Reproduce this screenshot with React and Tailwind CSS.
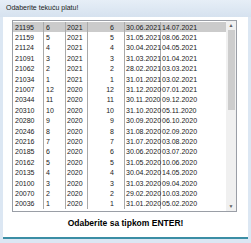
import React from "react";

const rows = [
  ["21195", "6", "2021", "6", "30.06.2021", "14.07.2021"],
  ["21159", "5", "2021", "5", "31.05.2021", "08.06.2021"],
  ["21124", "4", "2021", "4", "30.04.2021", "04.05.2021"],
  ["21091", "3", "2021", "3", "31.03.2021", "01.04.2021"],
  ["21062", "2", "2021", "2", "28.02.2021", "03.03.2021"],
  ["21034", "1", "2021", "1", "31.01.2021", "03.02.2021"],
  ["21007", "12", "2020", "12", "31.12.2020", "07.01.2021"],
  ["20344", "11", "2020", "11", "30.11.2020", "09.12.2020"],
  ["20310", "10", "2020", "10", "31.10.2020", "05.11.2020"],
  ["20280", "9", "2020", "9", "30.09.2020", "06.10.2020"],
  ["20246", "8", "2020", "8", "31.08.2020", "02.09.2020"],
  ["20216", "7", "2020", "7", "31.07.2020", "03.08.2020"],
  ["20185", "6", "2020", "6", "30.06.2020", "03.07.2020"],
  ["20162", "5", "2020", "5", "31.05.2020", "10.06.2020"],
  ["20135", "4", "2020", "4", "30.04.2020", "14.05.2020"],
  ["20100", "3", "2020", "3", "31.03.2020", "09.04.2020"],
  ["20070", "2", "2020", "2", "29.02.2020", "10.03.2020"],
  ["20036", "1", "2020", "1", "31.01.2020", "05.02.2020"],
];

const sep = "border-r border-[#a9a9a9]";

export default function App() {
  return (
    <div
      className="w-[251px] h-[243px] bg-[#dce7f3] flex flex-col text-[#1a1a1a]"
      style={{ fontFamily: '"Liberation Sans", Arial, sans-serif' }}
    >
      {/* title bar */}
      <div className="h-[17px] flex items-center pl-[6px] text-[7px] bg-gradient-to-b from-[#e6eef7] to-[#d6e2ef]">
        Odaberite tekuću platu!
      </div>

      {/* client area */}
      <div className="flex-1 mx-[3px] mb-[4px] bg-white border-b-2 border-[#3b8ea5] flex flex-col">
        <div className="mt-[3px] ml-[9px] w-[225px] h-[192px] border border-[#9a9ea6] flex">
          <div className="flex-1 overflow-hidden pt-[1px]">
            {rows.map((r, i) => (
              <div
                key={i}
                className={`h-[10.4px] flex items-center text-[7px] leading-none ${
                  i === 0 ? "bg-[#cbcbcb]" : ""
                }`}
              >
                <div className={`w-[31px] h-full flex items-center pl-[2px] ${sep}`}>{r[0]}</div>
                <div className={`w-[22px] h-full flex items-center pl-[2px] ${sep}`}>{r[1]}</div>
                <div className={`w-[22px] h-full flex items-center pl-[1px] ${sep}`}>{r[2]}</div>
                <div className={`w-[37px] h-full flex items-center justify-end pr-[10px] ${sep}`}>{r[3]}</div>
                <div className={`w-[36px] h-full flex items-center pl-[1px] ${sep}`}>{r[4]}</div>
                <div className="flex-1 h-full flex items-center pl-[1px]">{r[5]}</div>
              </div>
            ))}
          </div>
          {/* scrollbar */}
          <div className="w-[10px] bg-[#f0f0f0] flex flex-col items-center">
            <div className="h-[9px] w-full flex items-center justify-center text-[5px] text-[#606060]">▲</div>
            <div className="w-[7px] h-[80px] bg-[#cdcdcd]" />
            <div className="flex-1" />
            <div className="h-[9px] w-full flex items-center justify-center text-[5px] text-[#606060]">▼</div>
          </div>
        </div>
        <div className="flex-1 flex items-center justify-center text-[8.5px] font-bold text-black pb-[2px]">
          Odaberite sa tipkom ENTER!
        </div>
      </div>
    </div>
  );
}
